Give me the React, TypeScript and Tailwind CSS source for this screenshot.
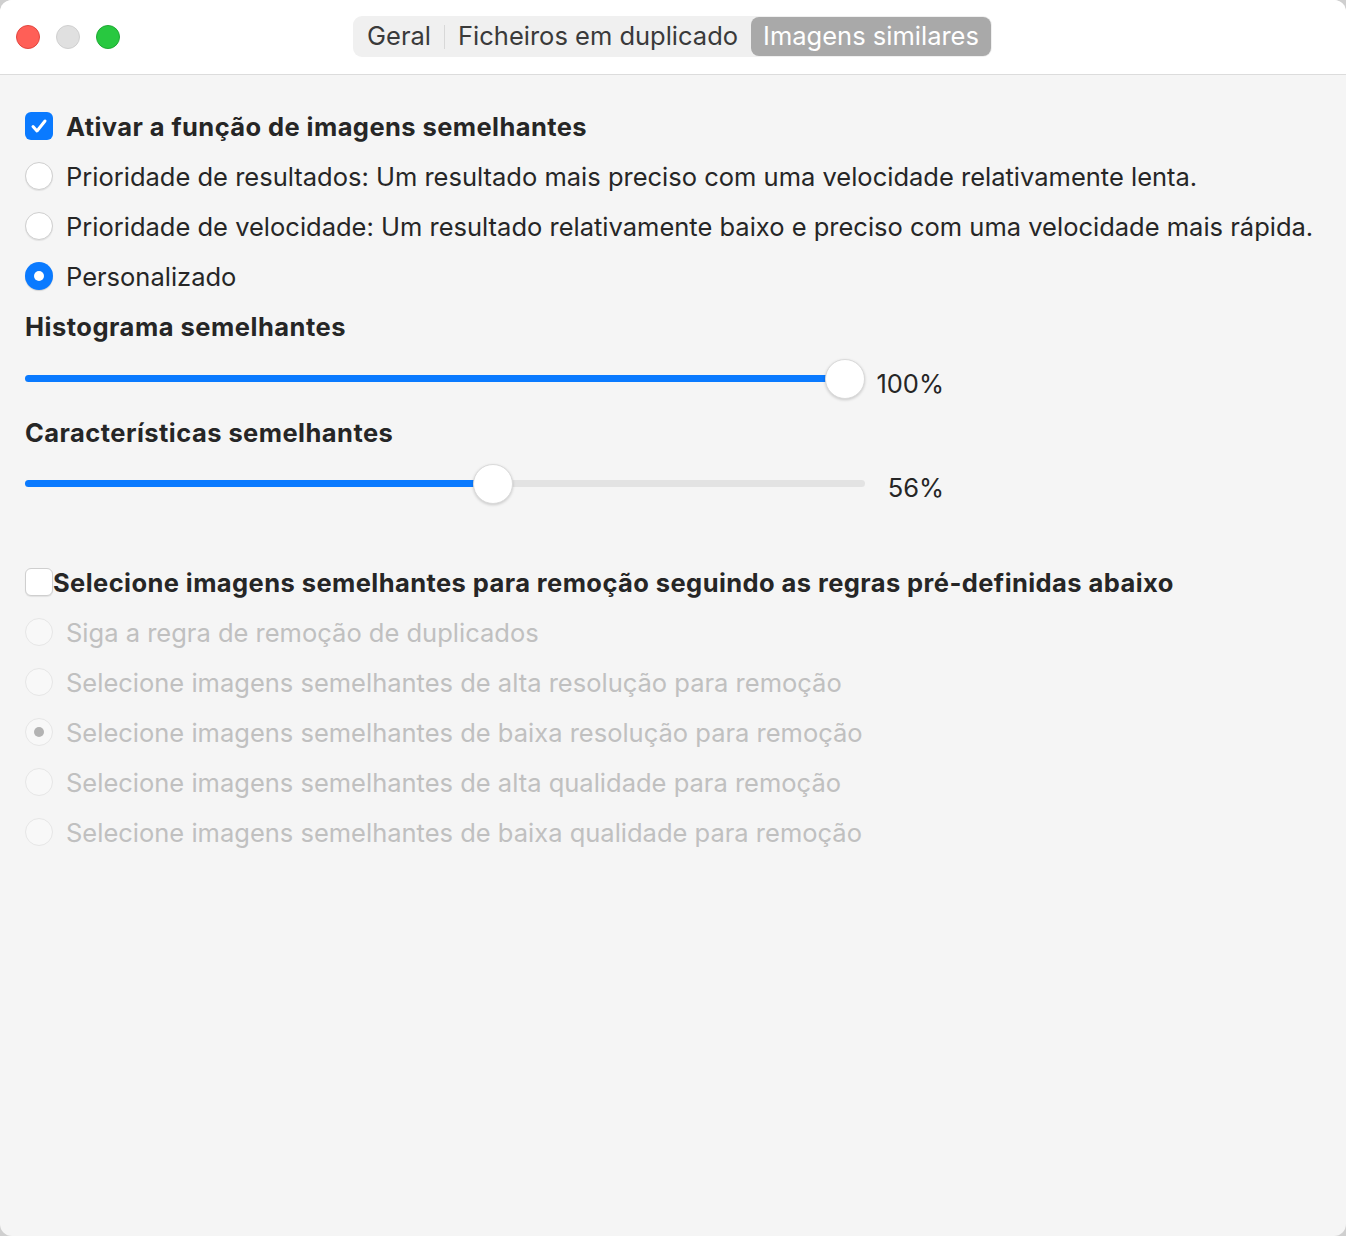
import React from "react";

const font = { fontFamily: "Inter, 'Noto Sans', sans-serif" };

function Radio({ checked, disabled }: { checked?: boolean; disabled?: boolean }) {
  if (checked && !disabled) {
    return (
      <div className="flex h-[28px] w-[28px] shrink-0 items-center justify-center rounded-full bg-[#0a7aff] shadow-[0_1px_1px_rgba(0,0,0,0.15)]">
        <div className="h-[10px] w-[10px] rounded-full bg-white" />
      </div>
    );
  }
  if (disabled) {
    return (
      <div className="flex h-[28px] w-[28px] shrink-0 items-center justify-center rounded-full border border-[#e6e6e6] bg-[#f8f8f8]">
        {checked && <div className="h-[10px] w-[10px] rounded-full bg-[#b3b3b3]" />}
      </div>
    );
  }
  return (
    <div className="h-[28px] w-[28px] shrink-0 rounded-full border border-[#cfcfcf] bg-white shadow-[0_1px_1px_rgba(0,0,0,0.08)]" />
  );
}

function Slider({ value }: { value: number }) {
  const pos = 20 + 800 * (value / 100);
  return (
    <div className="flex h-full items-center">
      <div className="relative h-[40px] w-[840px]">
        <div className="absolute left-0 right-0 top-[16px] h-[7px] rounded-full bg-[#e3e3e3]" />
        <div
          className="absolute left-0 top-[16px] h-[7px] rounded-full bg-[#0a7aff]"
          style={{ width: pos }}
        />
        <div
          className="absolute top-0 h-[40px] w-[40px] rounded-full border border-[#dadada] bg-white shadow-[0_1px_3px_rgba(0,0,0,0.18)]"
          style={{ left: pos - 20 }}
        />
      </div>
      <div className="w-[79px] pt-[10px] text-right text-[25.5px] text-[#262626]">{value}%</div>
    </div>
  );
}

export default function App() {
  const rules = [
    { label: "Siga a regra de remoção de duplicados" },
    { label: "Selecione imagens semelhantes de alta resolução para remoção" },
    { label: "Selecione imagens semelhantes de baixa resolução para remoção", checked: true },
    { label: "Selecione imagens semelhantes de alta qualidade para remoção" },
    { label: "Selecione imagens semelhantes de baixa qualidade para remoção" },
  ];

  return (
    <div className="h-[1236px] w-[1346px] bg-[#cfcfcf]" style={font}>
      <div className="flex h-full w-full flex-col overflow-hidden rounded-[12px] bg-[#f5f5f5]">
        {/* title bar */}
        <div className="relative flex h-[75px] shrink-0 items-center border-b border-[#dcdcdc] bg-white">
          <div className="flex gap-[16px] pl-[16px]">
            <div className="h-[24px] w-[24px] rounded-full border border-[#e2463f] bg-[#ff5f57]" />
            <div className="h-[24px] w-[24px] rounded-full border border-[#d0d0d0] bg-[#e0e0e0]" />
            <div className="h-[24px] w-[24px] rounded-full border border-[#1fa934] bg-[#28c840]" />
          </div>
          <div className="absolute left-[353px] top-[16px] flex h-[41px] items-center rounded-[9px] bg-[#f0f0f0] px-[1px] text-[25.5px] text-[#3a3a3a]">
            <div className="px-[13px]">Geral</div>
            <div className="h-[24px] w-px bg-[#d8d8d8]" />
            <div className="px-[13px]">Ficheiros em duplicado</div>
            <div className="flex h-[39px] items-center rounded-[8px] bg-[#a9a9a9] px-[12px] text-white">
              Imagens similares
            </div>
          </div>
        </div>

        {/* content */}
        <div className="flex flex-col pl-[25px] pt-[26px] text-[25.5px] text-[#262626]">
          <div className="flex h-[50px] items-center gap-[13px]">
            <div className="flex h-[28px] w-[28px] items-center justify-center rounded-[6px] bg-[#0a7aff]">
              <svg width="20" height="20" viewBox="0 0 20 20" fill="none">
                <path d="M4 10.5l4 4.5 8-10" stroke="white" strokeWidth="3" strokeLinecap="round" strokeLinejoin="round" />
              </svg>
            </div>
            <span className="pt-[3px] font-bold tracking-[0.42px]">Ativar a função de imagens semelhantes</span>
          </div>
          <div className="flex h-[50px] items-center gap-[13px]">
            <Radio />
            <span className="pt-[3px]">Prioridade de resultados: Um resultado mais preciso com uma velocidade relativamente lenta.</span>
          </div>
          <div className="flex h-[50px] items-center gap-[13px]">
            <Radio />
            <span className="pt-[3px]">Prioridade de velocidade: Um resultado relativamente baixo e preciso com uma velocidade mais rápida.</span>
          </div>
          <div className="flex h-[50px] items-center gap-[13px]">
            <Radio checked />
            <span className="pt-[3px]">Personalizado</span>
          </div>

          <div className="flex h-[50px] items-center pt-[3px] font-bold tracking-[0.5px]">Histograma semelhantes</div>
          <div className="h-[56px]">
            <Slider value={100} />
          </div>
          <div className="flex h-[50px] items-center pt-[3px] font-bold tracking-[0.45px]">Características semelhantes</div>
          <div className="h-[53px]">
            <Slider value={56} />
          </div>

          <div className="h-[47px]" />

          <div className="flex h-[50px] items-center">
            <div className="h-[28px] w-[28px] shrink-0 rounded-[6px] border border-[#cfcfcf] bg-white shadow-[0_1px_1px_rgba(0,0,0,0.08)]" />
            <span className="pt-[3px] font-bold tracking-[0.42px]">Selecione imagens semelhantes para remoção seguindo as regras pré-definidas abaixo</span>
          </div>
          {rules.map((r, i) => (
            <div key={i} className="flex h-[50px] items-center gap-[13px] text-[#c0c0c0]">
              <Radio disabled checked={r.checked} />
              <span className="pt-[3px]">{r.label}</span>
            </div>
          ))}
        </div>
      </div>
    </div>
  );
}
